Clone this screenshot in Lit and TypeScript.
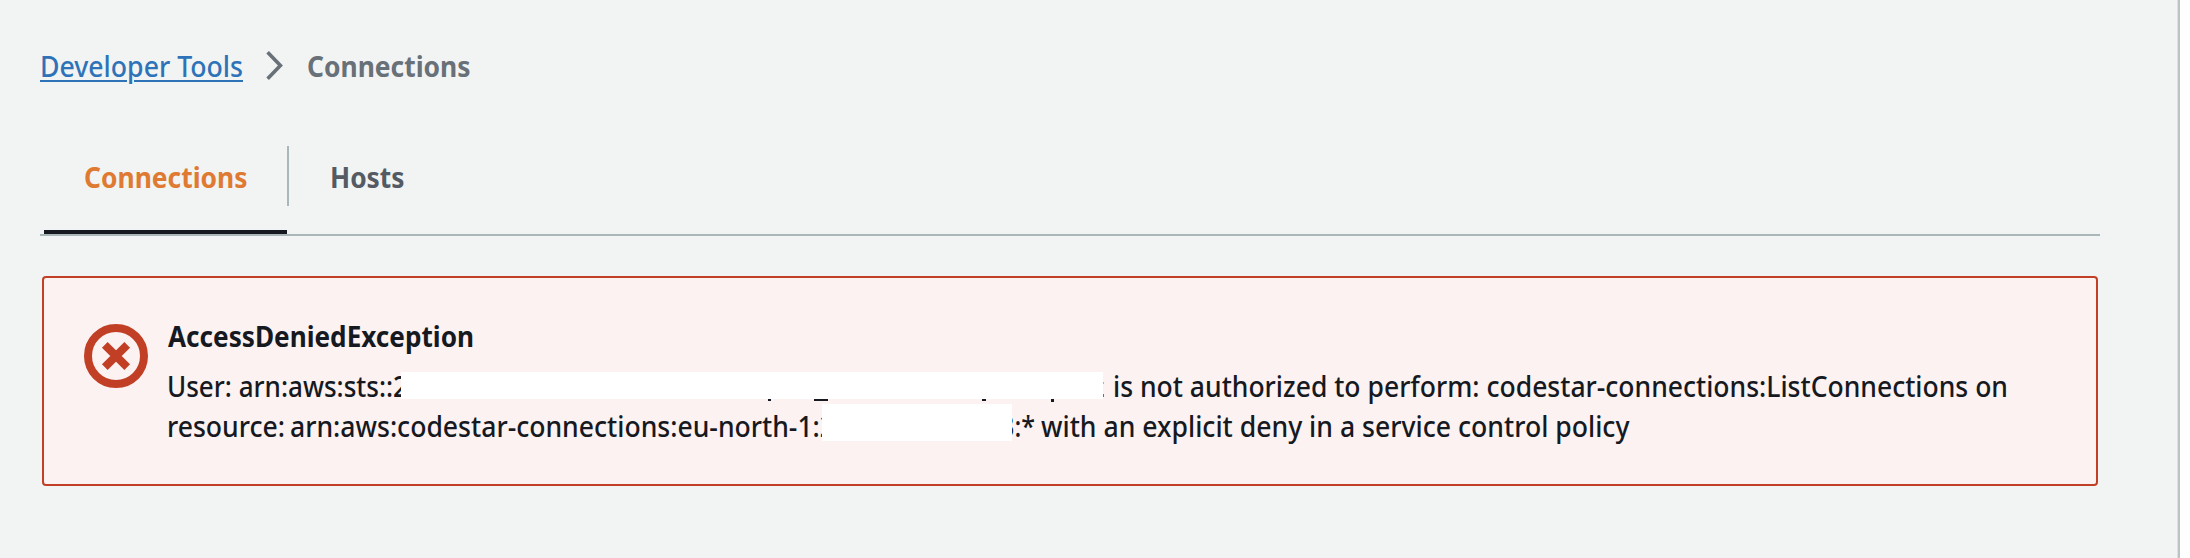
import { LitElement, html, css } from "lit";

/** One run of text condensed or widened to an exact width. */
class FitText extends LitElement {
  static properties = { width: { type: Number } };
  width = 0;
  constructor() {
    super();
    this.width = 0;
  }
  static styles = css`
    :host { display: block; flex: none; white-space: pre; }
    .ink { display: inline-block; transform-origin: 0 50%; }
  `;
  firstUpdated() {
    const ink = this.renderRoot.querySelector(".ink") as HTMLElement;
    const natural = ink.getBoundingClientRect().width;
    this.style.width = `${this.width}px`;
    ink.style.transform = `scaleX(${this.width / natural})`;
  }
  render() {
    return html`<span class="ink"><slot></slot></span>`;
  }
}
customElements.define("fit-text", FitText);

class AppRoot extends LitElement {
  static styles = css`
    :host {
      display: flex;
      box-sizing: border-box;
      width: 2190px;
      height: 558px;
      overflow: hidden;
      background: #fefefe;
      color: #16191f;
      font: 500 28px/40px "Noto Sans", sans-serif;
    }
    .page {
      box-sizing: border-box;
      width: 2180px;
      height: 558px;
      padding: 46px 80px 0 40px;
      background: linear-gradient(to right, #f2f4f3 2177px, #dfe2e2 2177px 2178px, #bdc2c4 2178px);
    }
    .crumbs { display: flex; height: 40px; }
    .link {
      color: #2e73b8;
      text-decoration: underline;
      text-decoration-thickness: 2px;
      text-underline-offset: 3px;
    }
    .chevron { width: 18px; height: 32px; margin: 4px 24px 0 22px; }
    .current { color: #687078; font-weight: 700; }
    .tabs {
      display: flex;
      height: 88px;
      margin-top: 60px;
      border-bottom: 2px solid #aab7b8;
      font-weight: 700;
    }
    .tab { box-sizing: border-box; height: 88px; padding-top: 11px; color: #545b64; }
    .active {
      width: 243px;
      margin-left: 4px;
      padding-left: 40px;
      border-bottom: 4px solid #16191f;
      color: #df7a33;
    }
    .divider { width: 2px; height: 60px; background: #aab7b8; }
    .hosts { padding-left: 41px; }
    .alert {
      box-sizing: border-box;
      display: flex;
      width: 2056px;
      height: 210px;
      margin: 40px 0 0 2px;
      padding: 38px 0 0 40px;
      border: 2px solid #c13f25;
      border-radius: 4px;
      background: #fbf2f1;
    }
    .icon { flex: none; width: 64px; height: 64px; margin: 8px 19px 0 0; }
    .title { margin: 0 0 10px 1px; font-weight: 700; }
    .line { display: flex; height: 40px; }
    .resource { word-spacing: -2px; }
    .suffix { margin-right: 6px; }
    .mask { position: relative; z-index: 1; flex: none; background: #fff; }
    .user { width: 702px; height: 27px; margin: 6px 9.7px 0 -7px; }
    .account { width: 190px; height: 37px; margin: -2px -12px 0 -13px; }
    .speck { position: absolute; background: #16191f; }
    .s1 { left: 367px; top: 27px; width: 3px; height: 2px; }
    .s2 { left: 413px; top: 27px; width: 14px; height: 2px; }
    .s3 { left: 581px; top: 27px; width: 4px; height: 2px; }
    .s4 { left: 650px; top: 27px; width: 3px; height: 3px; }
    .s5 { left: 702px; top: 10px; width: 1px; height: 2px; opacity: 0.3; }
    .s6 { left: 702px; top: 22px; width: 1px; height: 3px; opacity: 0.6; }
  `;
  render() {
    return html`
      <div class="page">
        <nav class="crumbs">
          <fit-text .width=${203}><a class="link">Developer Tools</a></fit-text>
          <svg class="chevron" viewBox="0 0 18 32" fill="none" stroke="#687078" stroke-width="3.6">
            <path d="M2.6 2.3 15.4 15.5 2.6 28.7" />
          </svg>
          <fit-text class="current" .width=${163.5}>Connections</fit-text>
        </nav>
        <div class="tabs">
          <div class="tab active"><fit-text .width=${163.5}>Connections</fit-text></div>
          <div class="divider"></div>
          <div class="tab hosts"><fit-text .width=${74.5}>Hosts</fit-text></div>
        </div>
        <section class="alert">
          <svg class="icon" viewBox="0 0 64 64" fill="none" stroke="#c13f25" stroke-width="8">
            <circle cx="32" cy="32" r="28" />
            <path d="M20.8 20.8 43.2 43.2M43.2 20.8 20.8 43.2" />
          </svg>
          <div>
            <div class="title"><fit-text .width=${306}>AccessDeniedException</fit-text></div>
            <div class="line">
              <fit-text .width=${241}>User: arn:aws:sts::2</fit-text>
              <div class="mask user">
                <i class="speck s1"></i><i class="speck s2"></i><i class="speck s3"></i>
                <i class="speck s4"></i><i class="speck s5"></i><i class="speck s6"></i>
              </div>
              <fit-text .width=${895}>is not authorized to perform: codestar-connections:ListConnections on</fit-text>
            </div>
            <div class="line">
              <fit-text class="resource" .width=${668}>resource: arn:aws:codestar-connections:eu-north-1:2</fit-text>
              <div class="mask account"></div>
              <fit-text class="suffix" .width=${35}>3:*</fit-text>
              <fit-text .width=${588.5}>with an explicit deny in a service control policy</fit-text>
            </div>
          </div>
        </section>
      </div>
    `;
  }
}
customElements.define("app-root", AppRoot);
